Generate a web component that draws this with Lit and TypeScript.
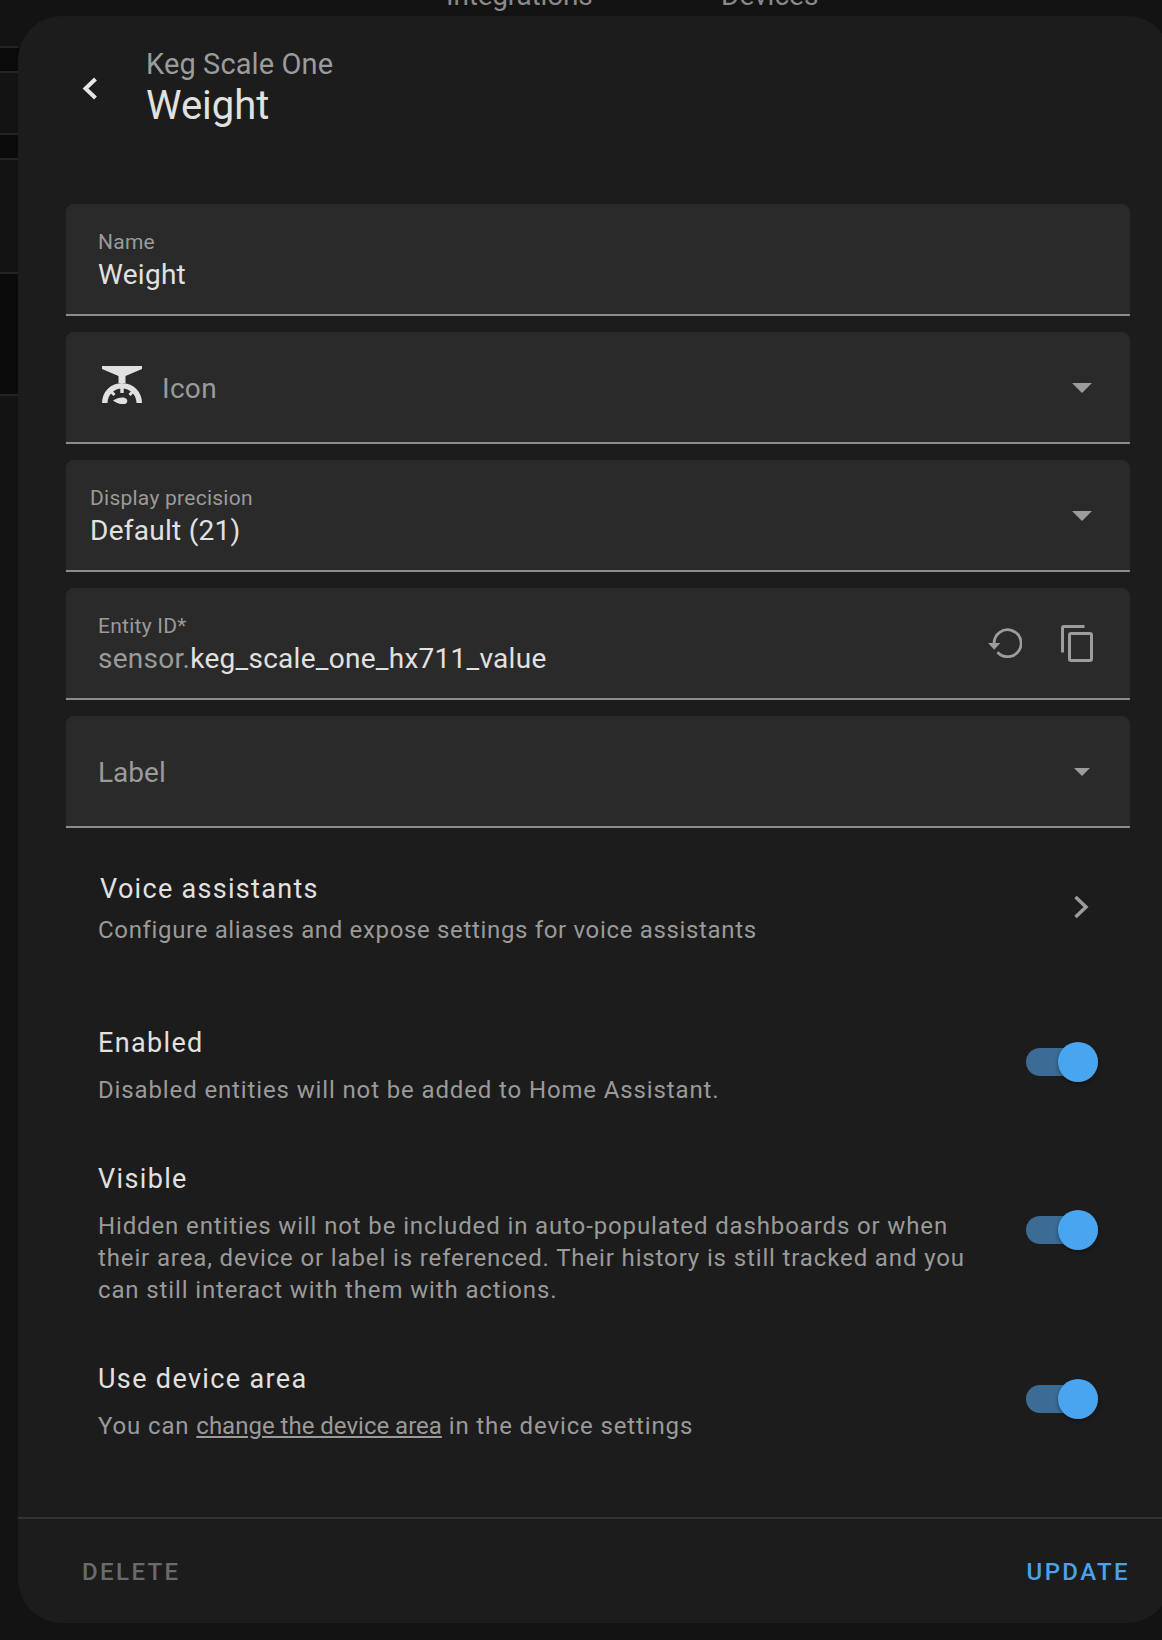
import { LitElement, html, css, svg } from "lit";
import { customElement } from "lit/decorators.js";

const caret = svg`<svg class="caret" viewBox="0 0 20 10"><path d="M0 0H20L10 10Z"/></svg>`;
const caretSmall = svg`<svg class="caret small" viewBox="0 0 16 8"><path d="M0 0H16L8 8Z"/></svg>`;

const bands: [number, number][] = [[48, 23], [135, 23], [274, 120]];
const rules = [46, 71, 133, 158, 272, 394];

@customElement("app-root")
export class AppRoot extends LitElement {
  static styles = css`
    :host { display: block; width: 1162px; height: 1640px; position: relative; overflow: hidden; background: #131313; font-family: Roboto, sans-serif; color: #e1e1e1; }
    .backdrop { position: absolute; inset: 0; background: #131313; }
    .tab { position: absolute; top: -20px; font-size: 28px; line-height: 32px; color: #8a8a8a; }
    .tab.one { left: 446px; letter-spacing: -.2px; }
    .tab.two { left: 721px; }
    .rule { position: absolute; left: 0; width: 18px; height: 2px; background: #232323; }
    .band { position: absolute; left: 0; width: 40px; background: #0a0a0a; }
    .dialog { position: absolute; left: 18px; top: 16px; width: 1153px; height: 1607px; background: #1c1c1c; border-radius: 44px; display: flex; flex-direction: column; box-sizing: border-box; }
    header { display: flex; height: 188px; box-sizing: border-box; }
    .back { width: 128px; flex: none; position: relative; }
    .back svg { position: absolute; left: 64px; top: 61px; width: 16px; height: 23px; fill: none; stroke: #e6e6e6; stroke-width: 4; }
    .titles { padding-top: 31px; }
    .sub { font-size: 29px; line-height: 34px; color: #9b9b9b; letter-spacing: .1px; }
    .title { font-size: 40px; line-height: 48px; color: #e1e1e1; margin-top: 1px; }
    .fields { display: flex; flex-direction: column; gap: 16px; margin-left: 48px; width: 1064px; }
    .field { height: 112px; box-sizing: border-box; background: #2a2a2a; border-radius: 8px 8px 0 0; border-bottom: 2px solid #8c8c8c; display: flex; align-items: center; position: relative; padding-left: 32px; }
    .field.narrow { padding-left: 24px; }
    .stack { display: flex; flex-direction: column; padding-top: 5px; }
    .flabel { font-size: 21px; line-height: 24px; color: #9a9a9a; margin-bottom: 3px; letter-spacing: .25px; }
    .val { font-size: 28px; line-height: 36px; color: #e1e1e1; letter-spacing: .27px; }
    .muted { color: #9a9a9a; }
    .ph { font-size: 28px; color: #9a9a9a; padding-top: 2px; }
    .ph.icon { letter-spacing: .3px; }
    .caret { position: absolute; right: 38px; top: 51px; width: 20px; height: 10px; fill: #9c9c9c; }
    .caret.small { right: 40px; top: 52px; width: 16px; height: 8px; }
    .field svg.ic { flex: none; width: 40px; height: 38px; fill: #e1e1e1; stroke: none; margin: -4px 20px 0 4px; }
    .ic .s { fill: none; stroke: #e1e1e1; stroke-width: 3; }
    .actions { margin-left: auto; display: flex; gap: 39px; align-items: center; margin-right: 37px; }
    .actions svg { display: block; }
    .reload { fill: none; stroke: #9c9c9c; stroke-width: 2.8; }
    .reload .tip { fill: #9c9c9c; stroke: none; }
    .copy { fill: #9c9c9c; }
    .voice { display: flex; align-items: center; margin-left: 82px; margin-right: 82px; height: 170px; padding-bottom: 10px; box-sizing: border-box; justify-content: space-between; }
    .voice .t { font-size: 27px; line-height: 36px; letter-spacing: 1.3px; color: #e1e1e1; }
    .voice .d { font-size: 24px; line-height: 32px; letter-spacing: .66px; color: #9a9a9a; margin-top: 7px; margin-left: -2px; }
    .voice svg { flex: none; margin-bottom: 2px; }
    .rows { margin-left: 80px; width: 1052px; display: flex; flex-direction: column; }
    .row { display: flex; justify-content: space-between; align-items: center; padding: 28px 0; }
    .row .t { font-size: 27px; line-height: 36px; letter-spacing: 1.35px; color: #e1e1e1; margin-top: -1px; }
    .row .d { font-size: 24px; line-height: 32px; letter-spacing: .87px; color: #9a9a9a; margin-top: 13px; width: 880px; }
    .row a { color: inherit; text-decoration: underline; letter-spacing: 0; }
    .sw { width: 72px; height: 40px; position: relative; flex: none; margin: 0 52px 8px 0; }
    .row:last-child .sw { margin-bottom: 6px; }
    .track { position: absolute; left: 0; top: 6px; width: 72px; height: 28px; border-radius: 14px; background: #3a6c96; }
    .thumb { position: absolute; right: 0; top: 0; width: 40px; height: 40px; border-radius: 50%; background: #4aa5f0; box-shadow: 0 2px 4px rgba(0,0,0,.35); }
    footer { border-top: 2px solid #333; height: 106px; flex: none; display: flex; justify-content: space-between; align-items: center; padding: 2px 41px 0 64px; box-sizing: border-box; margin-top: auto; font-size: 24px; letter-spacing: 2.4px; font-weight: 500; }
    .del { color: #6a6a6a; }
    .upd { color: #4aa3ea; }
  `;

  private sw() {
    return html`<div class="sw"><div class="track"></div><div class="thumb"></div></div>`;
  }

  render() {
    return html`
      <div class="backdrop">
        <div class="tab one">Integrations</div>
        <div class="tab two">Devices</div>
        ${bands.map(([y, h]) => html`<div class="band" style="top:${y}px;height:${h}px"></div>`)}
        ${rules.map((y) => html`<div class="rule" style="top:${y}px"></div>`)}
      </div>
      <div class="dialog">
        <header>
          <div class="back"><svg viewBox="0 0 16 23"><path d="M13.5 2 3.5 11.5 13.5 21"/></svg></div>
          <div class="titles">
            <div class="sub">Keg Scale One</div>
            <div class="title">Weight</div>
          </div>
        </header>
        <div class="fields">
          <div class="field"><div class="stack"><span class="flabel">Name</span><span class="val">Weight</span></div></div>
          <div class="field">
            <svg class="ic" viewBox="0 0 40 38">
              <path d="M0 0H40V3L23.500 10V17H16.500V10L0 3Z"/>
              <path d="M0 37A20 20 0 0 1 40 37H34.500A14.500 14.500 0 0 0 5.500 37Z"/>
              <path d="M18.300 20H21.700V27H18.300Z"/>
              <path class="s" d="M9 25.500 12.500 29M31 25.500 27.500 29"/>
              <path d="M11 34.500C15 32 20 31 23 32C26 33 26 37 23 38C19 39 15 37 11 34.500Z"/>
            </svg>
            <span class="ph icon">Icon</span>${caret}
          </div>
          <div class="field narrow"><div class="stack"><span class="flabel">Display precision</span><span class="val">Default (21)</span></div>${caret}</div>
          <div class="field">
            <div class="stack"><span class="flabel">Entity ID*</span><span class="val"><span class="muted">sensor.</span>keg_scale_one_hx711_value</span></div>
            <div class="actions">
              <svg class="reload" width="34" height="30" viewBox="0 0 34 30"><path d="M6.100 15A13.500 13.500 0 1 1 9.500 24.200"/><path class="tip" d="M0 15H12.300L6.200 21.700Z"/></svg>
              <svg class="copy" width="32" height="37" viewBox="0 0 32 37"><path fill-rule="evenodd" d="M3 0H23.500V3H3V27.500H0V3A3 3 0 0 1 3 0ZM10 7H29A3 3 0 0 1 32 10V34A3 3 0 0 1 29 37H10A3 3 0 0 1 7 34V10A3 3 0 0 1 10 7ZM10 10V34H29V10Z"/></svg>
            </div>
          </div>
          <div class="field"><span class="ph">Label</span>${caretSmall}</div>
        </div>
        <div class="voice">
          <div><div class="t">Voice assistants</div><div class="d">Configure aliases and expose settings for voice assistants</div></div>
          <svg width="16" height="24" viewBox="0 0 16 24" fill="none" stroke="#9c9c9c" stroke-width="3.500"><path d="M2.500 2 13 12 2.500 22"/></svg>
        </div>
        <div class="rows">
          <div class="row"><div><div class="t">Enabled</div><div class="d">Disabled entities will not be added to Home Assistant.</div></div>${this.sw()}</div>
          <div class="row"><div><div class="t">Visible</div><div class="d">Hidden entities will not be included in auto-populated dashboards or when their area, device or label is referenced. Their history is still tracked and you can still interact with them with actions.</div></div>${this.sw()}</div>
          <div class="row"><div><div class="t">Use device area</div><div class="d">You can <a>change the device area</a> in the device settings</div></div>${this.sw()}</div>
        </div>
        <footer><span class="del">DELETE</span><span class="upd">UPDATE</span></footer>
      </div>
    `;
  }
}
